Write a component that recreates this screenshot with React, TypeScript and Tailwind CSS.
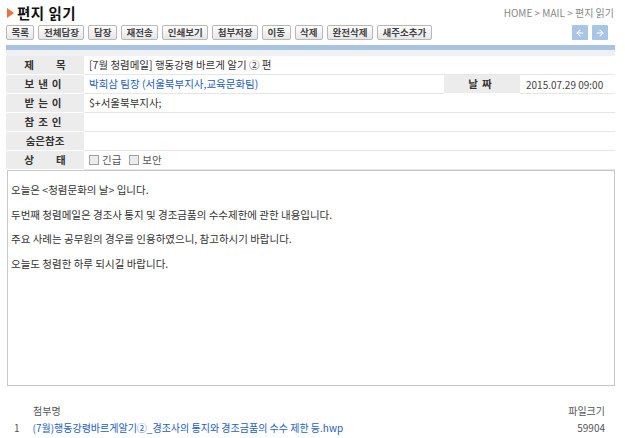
import { ArrowLeft, ArrowRight } from "lucide-react";

const BUTTONS = ["목록", "전체답장", "답장", "재전송", "인쇄보기", "첨부저장", "이동", "삭제", "완전삭제", "새주소추가"];

const BODY = [
  "오늘은 <청렴문화의 날> 입니다.",
  "두번째 청렴메일은 경조사 통지 및 경조금품의 수수제한에 관한 내용입니다.",
  "주요 사례는 공무원의 경우를 인용하였으니, 참고하시기 바랍니다.",
  "오늘도 청렴한 하루 되시길 바랍니다.",
];

function Label({ children }: { children: React.ReactNode }) {
  return (
    <div className="w-[78px] shrink-0 flex items-center justify-center bg-[#ececec] border-b border-white text-[10.5px] font-bold text-[#333]">
      {children}
    </div>
  );
}

function Row({ label, children }: { label: React.ReactNode; children?: React.ReactNode }) {
  return (
    <div className="flex h-[19px]">
      <Label>{label}</Label>
      <div className="flex-1 flex items-center pl-[5px] border-b border-[#e6e6e6] text-[10.5px] text-[#333]">
        {children}
      </div>
    </div>
  );
}

function Check({ text }: { text: string }) {
  return (
    <span className="flex items-center gap-[3px] mr-[8px] text-[#555]">
      <span className="w-[10px] h-[10px] border border-[#a0a0a0] bg-[#ececec]" />
      {text}
    </span>
  );
}

export default function App() {
  return (
    <div
      className="w-[625px] h-[438px] bg-white overflow-hidden"
      style={{ fontFamily: '"Noto Sans CJK KR", "Noto Sans", sans-serif' }}
    >
      <div className="pl-[6px] w-[615px]">
        {/* Title */}
        <div className="flex items-center justify-between h-[24px] pt-[1px]">
          <div className="flex items-center gap-[3px]">
            <span className="w-0 h-0 border-y-[5px] border-y-transparent border-l-[7px] border-l-[#f0703c] ml-[1px]" />
            <span className="text-[14.5px] font-bold text-[#111] tracking-[0.5px]">편지 읽기</span>
          </div>
          <span className="text-[10px] text-[#888] pr-[1px]">HOME &gt; MAIL &gt; 편지 읽기</span>
        </div>

        {/* Buttons */}
        <div className="flex items-center justify-between h-[17px]">
          <div className="flex gap-[4px]">
            {BUTTONS.map((b) => (
              <span
                key={b}
                className="h-[15px] px-[4.5px] flex items-center rounded-[2px] border border-[#b8b8b8] bg-gradient-to-b from-white to-[#e6e6e6] text-[9.5px] font-bold text-[#444] leading-none"
              >
                {b}
              </span>
            ))}
          </div>
          <div className="flex gap-[4px] pr-[7px]">
            <span className="w-[16px] h-[15px] flex items-center justify-center bg-[#a9c5e6] rounded-[1px]">
              <ArrowLeft className="w-[10px] h-[10px] text-white" strokeWidth={2.5} />
            </span>
            <span className="w-[16px] h-[15px] flex items-center justify-center bg-[#a9c5e6] rounded-[1px]">
              <ArrowRight className="w-[10px] h-[10px] text-white" strokeWidth={2.5} />
            </span>
          </div>
        </div>

        {/* Bar */}
        <div className="mt-[4px] h-[5px] bg-[#a9c3e2]" />
        <div className="h-[6px] bg-[#eef0f2]" />

        {/* Header table */}
        <div>
          <Row label={<span className="flex gap-[22px]"><span>제</span><span>목</span></span>}>
            [7월 청렴메일] 행동강령 바르게 알기 ② 편
          </Row>
          <div className="flex h-[19px]">
            <Label><span className="tracking-[4px]">보낸이</span></Label>
            <div className="flex-1 flex items-center pl-[5px] border-b border-[#e6e6e6] text-[10.5px] text-[#2460c0]">
              박희삼 팀장 (서울북부지사,교육문화팀)
            </div>
            <div className="w-[76px] flex items-center justify-center bg-[#ececec] border-b border-white text-[10.5px] font-bold text-[#333]">
              <span className="tracking-[4px]">날짜</span>
            </div>
            <div className="w-[95px] flex items-center pl-[6px] border-b border-[#e6e6e6] text-[10px] text-[#444]">
              2015.07.29 09:00
            </div>
          </div>
          <Row label={<span className="tracking-[4px]">받는이</span>}>$+서울북부지사;</Row>
          <Row label={<span className="tracking-[4px]">참조인</span>} />
          <Row label="숨은참조" />
          <Row label={<span className="flex gap-[22px]"><span>상</span><span>태</span></span>}>
            <Check text="긴급" />
            <Check text="보안" />
          </Row>
        </div>

        {/* Body */}
        <div className="ml-[1px] w-[608px] h-[216px] border border-[#c8c8c8] pt-[7px] pl-[3px] text-[10.5px] text-[#333] leading-[24.5px]">
          {BODY.map((l) => (
            <div key={l}>{l}</div>
          ))}
        </div>

        {/* Attachments */}
        <div className="mt-[16px] text-[10px] leading-[17px]">
          <div className="flex justify-between pl-[27px] pr-[10px] text-[#555]">
            <span>첨부명</span>
            <span>파일크기</span>
          </div>
          <div className="flex justify-between pl-[8px] pr-[10px]">
            <span className="flex gap-[13px]">
              <span className="text-[#555]">1</span>
              <span className="text-[#2460c0]">(7월)행동강령바르게알기②_경조사의 통지와 경조금품의 수수 제한 등.hwp</span>
            </span>
            <span className="text-[#555]">59904</span>
          </div>
        </div>
      </div>
    </div>
  );
}
